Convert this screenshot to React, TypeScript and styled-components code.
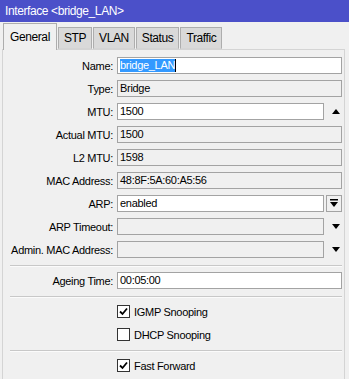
import React from "react";
import styled, { createGlobalStyle } from "styled-components";

const GlobalStyle = createGlobalStyle`
  html, body {
    margin: 0;
    padding: 0;
    background: #f0f0f0;
  }
  body {
    font-family: "Liberation Sans", Arial, sans-serif;
    font-size: 11px;
    color: #000;
    letter-spacing: -0.3px;
  }
`;

const Window = styled.div`
  width: 349px;
  height: 379px;
  overflow: hidden;
  background: #f0f0f0;
  display: flex;
  flex-direction: column;
`;

const TitleBar = styled.div`
  height: 22px;
  flex-shrink: 0;
  background: #4b50c9;
  color: #fff;
  padding-left: 5px;
  line-height: 22px;
  font-size: 12px;
  letter-spacing: -0.4px;
`;

const TabStrip = styled.div`
  height: 27px;
  flex-shrink: 0;
  display: flex;
  align-items: flex-end;
  padding-left: 3px;
  position: relative;
  z-index: 1;
`;

const Tab = styled.div<{ $active?: boolean }>`
  box-sizing: border-box;
  height: ${(p) => (p.$active ? "27px" : "22px")};
  margin-bottom: ${(p) => (p.$active ? "-1px" : "0")};
  padding: 0 ${(p) => (p.$active ? "6px" : "5px")};
  margin-right: 1px;
  display: flex;
  align-items: center;
  background: ${(p) => (p.$active ? "#f0f0f0" : "#d9d9d9")};
  border: 1px solid #adadad;
  border-bottom: ${(p) => (p.$active ? "none" : "1px solid #d4d4d4")};
  font-size: 12px;
  letter-spacing: -0.4px;
`;

const Panel = styled.div`
  flex: 1;
  margin: 0 4px 0 2px;
  border: 1px solid #d4d4d4;
  border-bottom: none;
  padding: 7px 2px 0 0;
  display: flex;
  flex-direction: column;
`;

const Row = styled.div`
  display: grid;
  grid-template-columns: 114px 1fr 18px;
  height: 17px;
  margin-bottom: 6px;
  align-items: center;
`;

const Label = styled.div`
  text-align: right;
  padding-right: 4px;
  white-space: nowrap;
`;

const Field = styled.div<{ $editable?: boolean; $full?: boolean }>`
  box-sizing: border-box;
  height: 17px;
  grid-column: ${(p) => (p.$full ? "2 / 4" : "2 / 3")};
  border: 1px solid #a3a3a3;
  background: ${(p) => (p.$editable ? "#fff" : "#f0f0f0")};
  padding: 0 2px;
  line-height: 15px;
  white-space: nowrap;
  overflow: hidden;
`;

const Selected = styled.span`
  display: inline-block;
  height: 13px;
  margin-top: 1px;
  line-height: 13px;
  background: #3399ff;
  color: #fff;
  vertical-align: top;
`;

const Caret = styled.span`
  display: inline-block;
  width: 1px;
  height: 13px;
  margin-top: 1px;
  background: #000;
  vertical-align: top;
`;

const Slot = styled.div`
  display: flex;
  justify-content: flex-end;
  align-items: center;
  padding-right: 2px;
  height: 17px;
`;

const DropButton = styled.div`
  box-sizing: border-box;
  margin-left: 2px;
  margin-right: -2px;
  width: 16px;
  height: 17px;
  border: 1px solid #a3a3a3;
  background: #f0f0f0;
  display: flex;
  align-items: center;
  justify-content: center;
`;

const Separator = styled.div`
  height: 1px;
  background: #c8c8c8;
  border-bottom: 1px solid #fbfbfb;
  margin: 1px 0 5px 7px;
`;

const CheckLabel = styled.label`
  grid-column: 2 / 4;
  display: flex;
  align-items: center;
  gap: 4px;
`;

const Box = styled.span`
  box-sizing: border-box;
  width: 13px;
  height: 13px;
  border: 1px solid #333;
  background: #fff;
  display: flex;
  align-items: center;
  justify-content: center;
`;

const UpArrow = () => (
  <svg width="8" height="5" viewBox="0 0 8 5">
    <polygon points="0,5 8,5 4,0" fill="#000" />
  </svg>
);

const DownArrow = () => (
  <svg width="8" height="5" viewBox="0 0 8 5">
    <polygon points="0,0 8,0 4,5" fill="#000" />
  </svg>
);

const DownBarArrow = () => (
  <svg width="8" height="9" viewBox="0 0 8 9">
    <rect x="0" y="0" width="8" height="1.5" fill="#000" />
    <polygon points="0,3 8,3 4,8" fill="#000" />
  </svg>
);

const CheckBox: React.FC<{ checked?: boolean; text: string }> = ({
  checked,
  text,
}) => (
  <Row>
    <CheckLabel>
      <Box>
        {checked && (
          <svg width="9" height="9" viewBox="0 0 9 9">
            <path
              d="M1 4.5 L3.5 7 L8 1.5"
              stroke="#000"
              strokeWidth="1.8"
              fill="none"
            />
          </svg>
        )}
      </Box>
      {text}
    </CheckLabel>
  </Row>
);

const tabs = ["General", "STP", "VLAN", "Status", "Traffic"];

export default function App() {
  return (
    <Window>
      <GlobalStyle />
      <TitleBar>Interface &lt;bridge_LAN&gt;</TitleBar>
      <TabStrip>
        {tabs.map((t, i) => (
          <Tab key={t} $active={i === 0}>
            {t}
          </Tab>
        ))}
      </TabStrip>
      <Panel>
        <Row>
          <Label>Name:</Label>
          <Field $editable $full>
            <Selected>bridge_LAN</Selected>
            <Caret />
          </Field>
        </Row>
        <Row>
          <Label>Type:</Label>
          <Field $full>Bridge</Field>
        </Row>
        <Row>
          <Label>MTU:</Label>
          <Field $editable>1500</Field>
          <Slot>
            <UpArrow />
          </Slot>
        </Row>
        <Row>
          <Label>Actual MTU:</Label>
          <Field $full>1500</Field>
        </Row>
        <Row>
          <Label>L2 MTU:</Label>
          <Field $full>1598</Field>
        </Row>
        <Row>
          <Label>MAC Address:</Label>
          <Field $full>48:8F:5A:60:A5:56</Field>
        </Row>
        <Row>
          <Label>ARP:</Label>
          <Field $editable>enabled</Field>
          <DropButton>
            <DownBarArrow />
          </DropButton>
        </Row>
        <Row>
          <Label>ARP Timeout:</Label>
          <Field />
          <Slot>
            <DownArrow />
          </Slot>
        </Row>
        <Row>
          <Label>Admin. MAC Address:</Label>
          <Field />
          <Slot>
            <DownArrow />
          </Slot>
        </Row>
        <Separator />
        <Row>
          <Label>Ageing Time:</Label>
          <Field $editable $full>
            00:05:00
          </Field>
        </Row>
        <Separator />
        <CheckBox checked text="IGMP Snooping" />
        <CheckBox text="DHCP Snooping" />
        <Separator />
        <CheckBox checked text="Fast Forward" />
      </Panel>
    </Window>
  );
}
